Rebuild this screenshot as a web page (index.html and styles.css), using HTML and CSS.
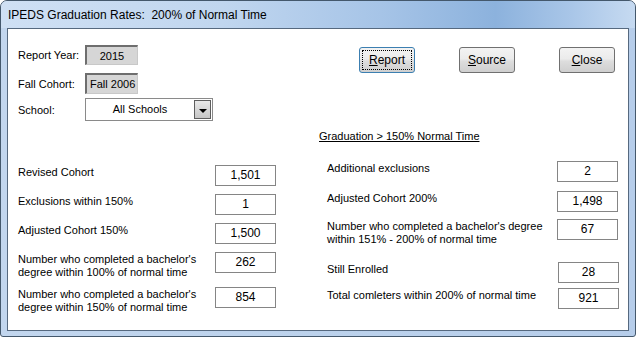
FILE: index.html
```html
<!DOCTYPE html>
<html lang="en">
<head>
    <meta charset="UTF-8">
    <title>IPEDS Graduation Rates</title>
    <link rel="stylesheet" href="styles.css">
</head>
<body>
    <div class="window">
        <div class="titlebar">IPEDS Graduation Rates:&nbsp; 200% of Normal Time</div>

        <div class="client">
            <div class="top">
                <div class="filters">
                    <div class="filter-row row-year">
                        <span class="filter-label">Report Year:</span>
                        <div class="readonly centered">2015</div>
                    </div>
                    <div class="filter-row row-cohort">
                        <span class="filter-label">Fall Cohort:</span>
                        <div class="readonly">Fall 2006</div>
                    </div>
                    <div class="filter-row row-school">
                        <span class="filter-label">School:</span>
                        <div class="combo">
                            <span class="combo-text">All Schools</span>
                            <span class="combo-btn"><span class="arrow"></span></span>
                        </div>
                    </div>
                </div>

                <div class="buttons">
                    <button class="btn focused"><span class="focus-ring"><u>R</u>eport</span></button>
                    <button class="btn"><u>S</u>ource</button>
                    <button class="btn"><u>C</u>lose</button>
                </div>
            </div>

            <div class="lower">
                <div class="col col-left">
                    <div class="field">
                        <span class="field-label">Revised Cohort</span>
                        <div class="value">1,501</div>
                    </div>
                    <div class="field">
                        <span class="field-label">Exclusions within 150%</span>
                        <div class="value">1</div>
                    </div>
                    <div class="field">
                        <span class="field-label">Adjusted Cohort 150%</span>
                        <div class="value">1,500</div>
                    </div>
                    <div class="field">
                        <span class="field-label">Number who completed a bachelor's<br>degree within 100% of normal time</span>
                        <div class="value">262</div>
                    </div>
                    <div class="field">
                        <span class="field-label">Number who completed a bachelor's<br>degree within 150% of normal time</span>
                        <div class="value">854</div>
                    </div>
                </div>

                <div class="col col-right">
                    <div class="section-title">Graduation &gt; 150% Normal Time</div>
                    <div class="field first">
                        <span class="field-label">Additional exclusions</span>
                        <div class="value">2</div>
                    </div>
                    <div class="field tight">
                        <span class="field-label">Adjusted Cohort 200%</span>
                        <div class="value">1,498</div>
                    </div>
                    <div class="field tight">
                        <span class="field-label">Number who completed a bachelor's degree<br>within 151% - 200% of normal time</span>
                        <div class="value">67</div>
                    </div>
                    <div class="field wide">
                        <span class="field-label">Still Enrolled</span>
                        <div class="value shifted">28</div>
                    </div>
                    <div class="field snug">
                        <span class="field-label">Total comleters within 200% of normal time</span>
                        <div class="value shifted">921</div>
                    </div>
                </div>
            </div>
        </div>
    </div>
</body>
</html>
```

FILE: styles.css
```css
* {
    margin: 0;
    padding: 0;
    box-sizing: border-box;
}

body {
    background: #fff;
    font-family: 'Liberation Sans', Arial, sans-serif;
    font-size: 11px;
    color: #000;
}

.window {
    width: 636px;
    height: 337px;
    border: 1px solid #44586c;
    border-radius: 7px 7px 3px 3px;
    background: linear-gradient(90deg, #c2d6ee 0%, #bcd2ec 50%, #b6cdea 100%);
    padding: 0 6px 5px 6px;
    display: flex;
    flex-direction: column;
}

.titlebar {
    height: 27px;
    margin: 0 -6px;
    padding: 7px 0 0 7px;
    font-size: 12px;
    color: #000;
    background: linear-gradient(90deg, #cfe0f4 0%, #c0d6ef 35%, #a6c4e7 60%, #8cb2dd 78%, #a9c6e8 90%, #c6daf1 100%);
    border-radius: 6px 6px 0 0;
}

.client {
    flex: 1;
    background: #fff;
    border: 1px solid #56697f;
    padding: 16px 10px 0 10px;
}

/* top area */
.top {
    display: flex;
    height: 77px;
}

.filters {
    width: 341px;
}

.filter-row {
    display: flex;
    align-items: center;
}

.filter-label {
    width: 67px;
}

.row-year {
    height: 20px;
}

.row-cohort {
    height: 21px;
    margin-top: 8px;
}

.row-school {
    height: 23px;
    margin-top: 4px;
}

.readonly {
    width: 53px;
    height: 100%;
    background: #d6d6d6;
    border-top: 2px solid #6e6e6e;
    border-left: 2px solid #6e6e6e;
    border-right: 1px solid #c8c8c8;
    border-bottom: 1px solid #c8c8c8;
    font-size: 11px;
    white-space: nowrap;
    padding: 3px 0 0 3px;
}

.readonly.centered {
    text-align: center;
    padding-left: 0;
}

.combo {
    width: 128px;
    height: 100%;
    border: 1px solid #8a8a8a;
    display: flex;
    align-items: center;
    padding: 0 1px 0 0;
}

.combo-text {
    flex: 1;
    text-align: center;
    font-size: 11px;
    padding-bottom: 2px;
}

.combo-btn {
    width: 17px;
    height: 19px;
    border: 1px solid #5e5e5e;
    background: linear-gradient(#e9e9e9, #c6c6c6);
    display: flex;
    align-items: center;
    justify-content: center;
}

.arrow {
    width: 0;
    height: 0;
    border-left: 4px solid transparent;
    border-right: 4px solid transparent;
    border-top: 4px solid #000;
    margin-top: 2px;
}

.buttons {
    display: flex;
    gap: 44px;
    padding-top: 2px;
}

.btn {
    width: 56px;
    height: 26px;
    border: 1px solid #707070;
    border-radius: 3px;
    background: linear-gradient(#f3f3f3 0%, #ebebeb 45%, #dddddd 55%, #cfcfcf 100%);
    font-family: 'Liberation Sans', Arial, sans-serif;
    font-size: 12px;
    color: #000;
    display: flex;
    align-items: center;
    justify-content: center;
}

.btn u {
    text-decoration: underline;
}

.btn.focused {
    border-color: #3c7fb1;
    padding: 2px;
}

.focus-ring {
    width: 100%;
    height: 100%;
    border: 1px dotted #000;
    display: flex;
    align-items: center;
    justify-content: center;
}

/* data columns */
.lower {
    display: flex;
}

.col-left {
    width: 258px;
    padding-top: 43px;
}

.col-right {
    width: 299px;
    margin-left: 43px;
    padding-top: 8px;
}

.section-title {
    text-decoration: underline;
    line-height: 13px;
    margin-bottom: 18px;
}

.field {
    display: flex;
    justify-content: space-between;
    align-items: flex-start;
    margin-top: 8px;
}

.col-left .field:first-child {
    margin-top: 0;
}

.col-right .field {
    padding-left: 8px;
}

.col-right .field.first {
    margin-top: 0;
}

.col-right .field.tight {
    margin-top: 9px;
}

.col-right .field.tight + .field.tight {
    margin-top: 7px;
}

.col-right .field.wide {
    margin-top: 16px;
}

.col-right .field.snug {
    margin-top: 5px;
}

.field-label {
    line-height: 13px;
    padding-top: 1px;
}

.value {
    width: 61px;
    height: 21px;
    border: 1px solid #858585;
    text-align: center;
    font-size: 12px;
    padding-top: 2px;
}

.value.shifted {
    margin-right: -1px;
}
```
